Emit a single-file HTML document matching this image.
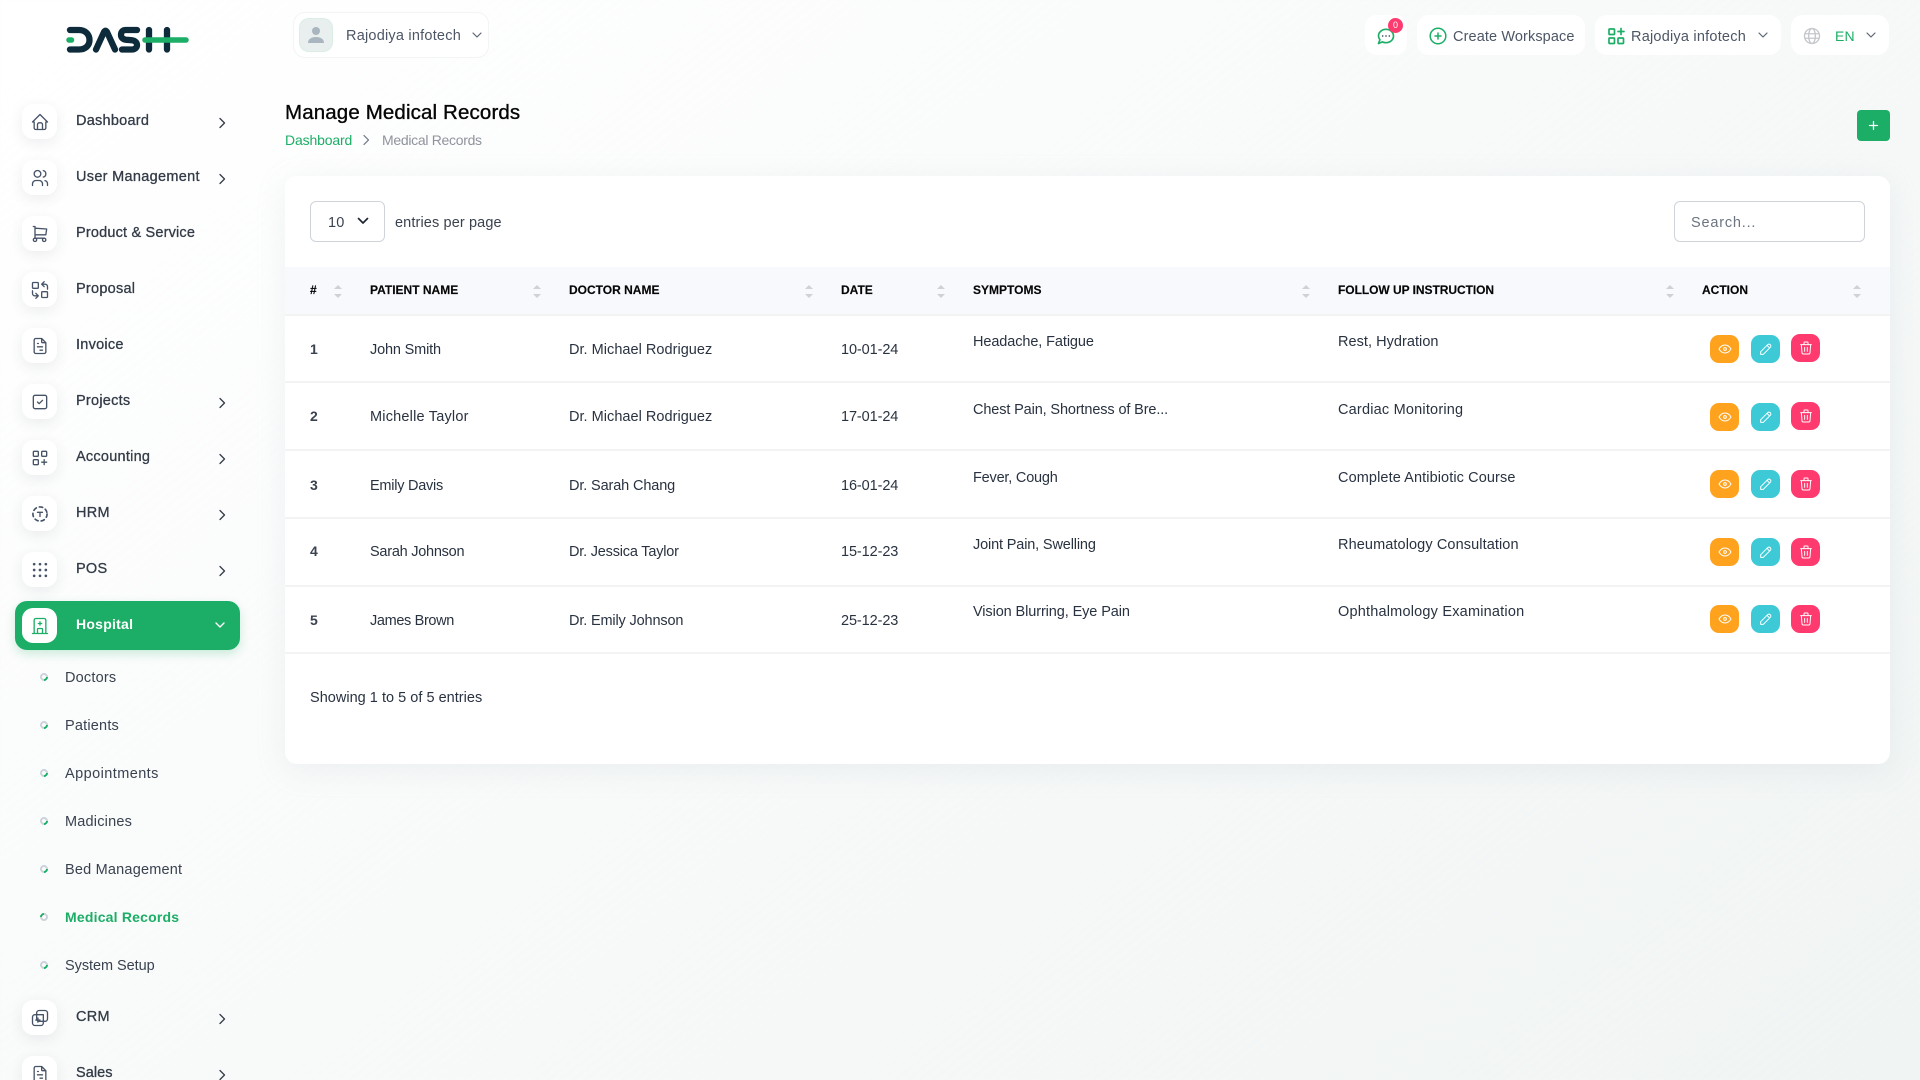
<!DOCTYPE html>
<html lang="en"><head><meta charset="utf-8"><title>Manage Medical Records</title>
<style>
*{box-sizing:border-box}
html,body{margin:0;padding:0;width:1920px;height:1080px;overflow:hidden}
body{background:linear-gradient(141.55deg,rgba(240,244,243,0) 3.46%,#f0f4f3 99.86%),#fff;font-family:"Liberation Sans",sans-serif;color:#293240;position:relative}
.t{position:absolute;white-space:nowrap;line-height:20px;font-size:14.5px;letter-spacing:.2px}
.m{font-size:14.5px;letter-spacing:.25px;color:#333b47;-webkit-text-stroke:.3px #333b47;left:76px}
.s{left:65px;color:#3a4250;letter-spacing:.2px}
.ib{position:absolute;left:22px;width:35px;height:35px;background:#fff;border-radius:11px;box-shadow:0 4px 14px rgba(60,70,90,.09)}
.ib svg{position:absolute;left:7.5px;top:7.5px;width:20px;height:20px;fill:none;stroke:#475467;stroke-width:1.6;stroke-linecap:round;stroke-linejoin:round}
.ch{position:absolute;left:217px;width:10px;height:12px;fill:none;stroke:#333b47;stroke-width:1.3;stroke-linecap:round;stroke-linejoin:round}
.b{position:absolute;left:40px;width:8px;height:8px;border-radius:50%;border:2px solid #ccd2da;border-right-color:#1cae66;transform:rotate(45deg)}
.pill{position:absolute;top:15px;height:40px;background:#fff;border-radius:12px}
.card{position:absolute;left:285px;top:176px;width:1605px;height:588px;background:#fff;border-radius:12px;box-shadow:0 6px 30px rgba(170,180,195,.16)}
.th{position:absolute;left:285px;top:267px;width:1605px;height:47px;background:#f8f9fd}
.ln{position:absolute;left:285px;width:1605px;height:2px;background:#f3f3f3}
.h{font-size:12px;font-weight:700;color:#060606;letter-spacing:0;top:279.500px;-webkit-text-stroke:.15px #060606}
.sa{position:absolute;top:284px;width:10px;height:15px}
.n{font-weight:700;left:310px;font-size:14px;color:#3a4250}
.ab{position:absolute;width:29px;height:28px;border-radius:9px}
.ab svg{position:absolute;left:6.5px;top:6px;width:16px;height:16px;fill:none;stroke:#fff;stroke-width:1.5;stroke-linecap:round;stroke-linejoin:round}
.or{background:#ffa21d;left:1710px}.cy{background:#3ec9d6;left:1751px}.rd{background:#ff3a6e;left:1791px}
.box{position:absolute;top:201px;height:41px;border:1px solid #ced4da;border-radius:6px;background:#fff}
</style></head><body>
<svg width="0" height="0" style="position:absolute">
<symbol id="home" viewBox="0 0 24 24"><path d="M5 12H3l9-9 9 9h-2M5 12v7a2 2 0 0 0 2 2h10a2 2 0 0 0 2-2v-7M9 21v-6a2 2 0 0 1 2-2h2a2 2 0 0 1 2 2v6"/></symbol>
<symbol id="users" viewBox="0 0 24 24"><circle cx="9" cy="7" r="4"/><path d="M3 21v-2a4 4 0 0 1 4-4h4a4 4 0 0 1 4 4v2M16 3.13a4 4 0 0 1 0 7.75M21 21v-2a4 4 0 0 0-3-3.85"/></symbol>
<symbol id="cart" viewBox="0 0 24 24"><circle cx="6" cy="19" r="2"/><circle cx="17" cy="19" r="2"/><path d="M17 17H6V3H4M6 5l14 1-1 7H6"/></symbol>
<symbol id="swap" viewBox="0 0 24 24"><rect x="3" y="3" width="7" height="7" rx="1"/><rect x="14" y="14" width="7" height="7" rx="1"/><path d="M21 11V8a3 3 0 0 0-3-3h-4l3 3m0-6l-3 3M3 13v3a3 3 0 0 0 3 3h4l-3-3m0 6l3-3"/></symbol>
<symbol id="file" viewBox="0 0 24 24"><path d="M14 3v4a1 1 0 0 0 1 1h4M17 21H7a2 2 0 0 1-2-2V5a2 2 0 0 1 2-2h7l5 5v11a2 2 0 0 1-2 2zM9 9h1M9 13h6M12 17h3"/></symbol>
<symbol id="check" viewBox="0 0 24 24"><rect x="4" y="4" width="16" height="16" rx="2"/><path d="M9 12l2 2 4-4"/></symbol>
<symbol id="apps" viewBox="0 0 24 24"><rect x="4" y="4" width="6" height="6" rx="1"/><rect x="14" y="4" width="6" height="6" rx="1"/><rect x="4" y="14" width="6" height="6" rx="1"/><path d="M14 17h6M17 14v6"/></symbol>
<symbol id="hrm" viewBox="0 0 24 24"><circle cx="12" cy="12" r="8.500" stroke-dasharray="4 3.800" stroke-width="2"/><path d="M9 10h6M12 10v5"/></symbol>
<symbol id="dots" viewBox="0 0 24 24"><g fill="#475467" stroke="none"><circle cx="5" cy="5" r="1.600"/><circle cx="12" cy="5" r="1.600"/><circle cx="19" cy="5" r="1.600"/><circle cx="5" cy="12" r="1.600"/><circle cx="12" cy="12" r="1.600"/><circle cx="19" cy="12" r="1.600"/><circle cx="5" cy="19" r="1.600"/><circle cx="12" cy="19" r="1.600"/><circle cx="19" cy="19" r="1.600"/></g></symbol>
<symbol id="crm" viewBox="0 0 24 24"><rect x="8" y="3" width="13" height="13" rx="3"/><path d="M16 8H6a3 3 0 0 0-3 3v7a3 3 0 0 0 3 3h7a3 3 0 0 0 3-3V8zM9.500 12v5M7 14.500h5"/></symbol>
<symbol id="hosp" viewBox="0 0 24 24"><path d="M3 21h18M5 21V5a2 2 0 0 1 2-2h10a2 2 0 0 1 2 2v16M9 21v-5a1 1 0 0 1 1-1h4a1 1 0 0 1 1 1v5M10 9h4M12 7v4"/></symbol>
<symbol id="eye" viewBox="0 0 24 24"><path d="M10 12a2 2 0 1 0 4 0a2 2 0 0 0-4 0M21 12c-2.400 4-5.400 6-9 6s-6.600-2-9-6c2.400-4 5.400-6 9-6s6.600 2 9 6"/></symbol>
<symbol id="pen" viewBox="0 0 24 24"><path d="M4 20h4L18.500 9.500a2.830 2.830 0 0 0-4-4L4 16v4M13.500 6.500l4 4"/></symbol>
<symbol id="trash" viewBox="0 0 24 24"><path d="M4 7h16M10 11v6M14 11v6M5 7l1 12a2 2 0 0 0 2 2h8a2 2 0 0 0 2-2l1-12M9 7V4a1 1 0 0 1 1-1h4a1 1 0 0 1 1 1v3"/></symbol>
<symbol id="r" viewBox="0 0 10 12"><path d="M3 1.500L7.500 6 3 10.500"/></symbol>
<symbol id="sort" viewBox="0 0 10 15"><path d="M5 1l4 4H1zM5 14l4-4H1z" fill="#ced1d6" stroke="none"/></symbol>
</svg>

<!-- logo -->
<svg style="position:absolute;left:60px;top:20px" width="135" height="40" viewBox="0 0 135 40" fill="none" stroke-linecap="round" stroke-linejoin="round">
<g stroke="#0d2b3a" stroke-width="6.300">
<path d="M10 10H19C25.500 10 29.500 14.500 29.500 20S25.500 29.500 19 29.500H10"/>
<path d="M36 29.500L44 12Q45.500 9.500 47 12L55 29.500"/>
<path d="M77 10H66C62 10 61 12.500 61 15S63 19.300 66 19.700L72 20.300C75.500 20.700 77 23 77 25S75.500 29.500 72 29.500H62"/>
<path d="M89 10V29.500M107 10V29.500"/>
</g>
<path d="M9 20H11.500M85 20H126" stroke="#1cae66" stroke-width="5.500"/>
</svg>

<!-- sidebar -->
<div class="ib" style="top:104px"><svg><use href="#home"/></svg></div><div class="t m" style="top:111px">Dashboard</div><svg class="ch" style="top:117px"><use href="#r"/></svg>
<div class="ib" style="top:160px"><svg><use href="#users"/></svg></div><div class="t m" style="top:167px;letter-spacing:.3px">User Management</div><svg class="ch" style="top:173px"><use href="#r"/></svg>
<div class="ib" style="top:216px"><svg><use href="#cart"/></svg></div><div class="t m" style="top:223px;letter-spacing:.18px">Product &amp; Service</div>
<div class="ib" style="top:272px"><svg><use href="#swap"/></svg></div><div class="t m" style="top:279px">Proposal</div>
<div class="ib" style="top:328px"><svg><use href="#file"/></svg></div><div class="t m" style="top:335px">Invoice</div>
<div class="ib" style="top:384px"><svg><use href="#check"/></svg></div><div class="t m" style="top:391px">Projects</div><svg class="ch" style="top:397px"><use href="#r"/></svg>
<div class="ib" style="top:440px"><svg><use href="#apps"/></svg></div><div class="t m" style="top:447px">Accounting</div><svg class="ch" style="top:453px"><use href="#r"/></svg>
<div class="ib" style="top:496px"><svg><use href="#hrm"/></svg></div><div class="t m" style="top:503px">HRM</div><svg class="ch" style="top:509px"><use href="#r"/></svg>
<div class="ib" style="top:552px"><svg><use href="#dots"/></svg></div><div class="t m" style="top:559px">POS</div><svg class="ch" style="top:565px"><use href="#r"/></svg>

<div style="position:absolute;left:15px;top:601px;width:225px;height:49px;background:#1cae66;border-radius:12px;box-shadow:0 4px 10px rgba(28,174,102,.22)"></div>
<div class="ib" style="top:608px;box-shadow:none"><svg style="stroke:#1cae66"><use href="#hosp"/></svg></div>
<div class="t" style="left:76px;top:614px;color:#fff;font-weight:700;font-size:14px;letter-spacing:.25px">Hospital</div>
<svg style="position:absolute;left:214px;top:620px;width:12px;height:10px;fill:none;stroke:#fff;stroke-width:1.4;stroke-linecap:round;stroke-linejoin:round" viewBox="0 0 12 10"><path d="M2 3l4 4 4-4"/></svg>

<span class="b" style="top:673px"></span><div class="t s" style="top:668px">Doctors</div>
<span class="b" style="top:721px"></span><div class="t s" style="top:716px">Patients</div>
<span class="b" style="top:769px"></span><div class="t s" style="top:764px;letter-spacing:.43px">Appointments</div>
<span class="b" style="top:817px"></span><div class="t s" style="top:812px">Madicines</div>
<span class="b" style="top:865px"></span><div class="t s" style="top:860px">Bed Management</div>
<span class="b" style="top:913px;border-color:#ccd2da;border-left-color:#1cae66"></span><div class="t s" style="top:907px;color:#1cae66;font-weight:700;font-size:14px;letter-spacing:.2px">Medical Records</div>
<span class="b" style="top:961px"></span><div class="t s" style="top:956px;letter-spacing:-.05px">System Setup</div>

<div class="ib" style="top:1000px"><svg><use href="#crm"/></svg></div><div class="t m" style="top:1006.500px">CRM</div><svg class="ch" style="top:1013px"><use href="#r"/></svg>
<div class="ib" style="top:1056px"><svg><use href="#file"/></svg></div><div class="t m" style="top:1062.500px;letter-spacing:.05px">Sales</div><svg class="ch" style="top:1069px"><use href="#r"/></svg>

<!-- top bar -->
<div style="position:absolute;left:293px;top:12px;width:196px;height:46px;background:#fff;border:1px solid #f2f4f5;border-radius:12px"></div>
<div style="position:absolute;left:299px;top:18px;width:34px;height:34px;border-radius:10px;background:#e8efee;box-shadow:inset 0 0 0 1px #dbeee5"></div>
<svg style="position:absolute;left:305px;top:24px" width="22" height="22" viewBox="0 0 22 22"><circle cx="11" cy="7" r="4" fill="#a9b6c0"/><path d="M3 19c0-4 3.500-6 8-6s8 2 8 6z" fill="#a9b6c0"/></svg>
<div class="t" style="left:346px;top:26px;color:#4d5665;letter-spacing:.22px">Rajodiya infotech</div>
<svg style="position:absolute;left:471px;top:30px;width:12px;height:10px;fill:none;stroke:#5c6573;stroke-width:1.2;stroke-linecap:round;stroke-linejoin:round" viewBox="0 0 12 10"><path d="M2 3l4 4 4-4"/></svg>

<div class="pill" style="left:1365px;width:42px"></div>
<svg style="position:absolute;left:1376px;top:26px" width="20" height="20" viewBox="0 0 24 24" fill="none" stroke="#1cae66" stroke-width="2" stroke-linecap="round" stroke-linejoin="round"><path d="M3 21l1.700-4.500C3.600 15 3 13.500 3 12c0-4.500 4-8 9-8s9 3.500 9 8-4 8-9 8c-1.500 0-3-.3-4.300-1z"/><path d="M8 12h.01M12 12h.01M16 12h.01" stroke="#475467"/></svg>
<div style="position:absolute;left:1388px;top:18px;width:15px;height:15px;border-radius:50%;background:#ff3a6e;color:#fff;font-size:9px;line-height:15px;text-align:center">0</div>

<div class="pill" style="left:1417px;width:168px"></div>
<svg style="position:absolute;left:1429px;top:27px" width="18" height="18" viewBox="0 0 18 18" fill="none" stroke="#1cae66" stroke-width="1.500" stroke-linecap="round"><circle cx="9" cy="9" r="7.800"/><path d="M9 6v6M6 9h6"/></svg>
<div class="t" style="left:1453px;top:26.500px;color:#4d5665;letter-spacing:.11px">Create Workspace</div>

<div class="pill" style="left:1595px;width:186px"></div>
<svg style="position:absolute;left:1607px;top:27px" width="18" height="18" viewBox="0 0 18 18" fill="none" stroke="#1cae66" stroke-width="1.700" stroke-linecap="round"><rect x="2" y="2" width="5.500" height="5.500" rx=".8"/><rect x="2" y="11" width="5.500" height="5.500" rx=".8"/><rect x="11" y="11" width="5.500" height="5.500" rx=".8"/><path d="M14 1.500v6M11 4.500h6"/></svg>
<div class="t" style="left:1631px;top:26.500px;color:#4d5665;letter-spacing:.22px">Rajodiya infotech</div>
<svg style="position:absolute;left:1757px;top:30px;width:12px;height:10px;fill:none;stroke:#5c6573;stroke-width:1.2;stroke-linecap:round;stroke-linejoin:round" viewBox="0 0 12 10"><path d="M2 3l4 4 4-4"/></svg>

<div class="pill" style="left:1791px;width:98px"></div>
<svg style="position:absolute;left:1803px;top:27px" width="18" height="18" viewBox="0 0 24 24" fill="none" stroke="#c4c7cb" stroke-width="1.800"><circle cx="12" cy="12" r="10"/><ellipse cx="12" cy="12" rx="4.500" ry="10"/><path d="M2.500 9h19M2.500 15h19"/></svg>
<div class="t" style="left:1835px;top:26px;color:#1cae66;font-size:14px">EN</div>
<svg style="position:absolute;left:1865px;top:30px;width:12px;height:10px;fill:none;stroke:#5c6573;stroke-width:1.2;stroke-linecap:round;stroke-linejoin:round" viewBox="0 0 12 10"><path d="M2 3l4 4 4-4"/></svg>

<!-- page header -->
<div class="t" style="left:285px;top:102px;font-size:20.5px;line-height:22px;color:#060606;-webkit-text-stroke:.35px #060606;letter-spacing:.13px">Manage Medical Records</div>
<div class="t" style="left:285px;top:130px;font-size:14px;color:#1cae66;letter-spacing:-.15px">Dashboard</div>
<svg style="position:absolute;left:361px;top:134px;width:10px;height:12px;fill:none;stroke:#6a7280;stroke-width:1.200;stroke-linecap:round;stroke-linejoin:round"><use href="#r"/></svg>
<div class="t" style="left:382px;top:130px;font-size:14px;color:#8e949d;letter-spacing:-.3px">Medical Records</div>
<div style="position:absolute;left:1857px;top:110px;width:33px;height:31px;background:#1cae66;border-radius:4px"></div>
<svg style="position:absolute;left:1868px;top:120px" width="11" height="11" viewBox="0 0 11 11" stroke="#fff" stroke-width="1.300" stroke-linecap="round"><path d="M5.500 1.500v8M1.500 5.500h8"/></svg>

<!-- card -->
<div class="card"></div>
<div class="box" style="left:310px;width:75px"></div>
<div class="t" style="left:328px;top:212.500px;letter-spacing:.2px;color:#3a4250">10</div>
<svg style="position:absolute;left:356px;top:216px;width:14px;height:10px;fill:none;stroke:#1f2733;stroke-width:1.700;stroke-linecap:round;stroke-linejoin:round" viewBox="0 0 14 10"><path d="M2.500 2.500L7 7l4.500-4.500"/></svg>
<div class="t" style="left:395px;top:212.500px;color:#3a4250;letter-spacing:.12px">entries per page</div>
<div class="box" style="left:1674px;width:191px"></div>
<div class="t" style="left:1691px;top:212.500px;color:#6c7480;letter-spacing:.8px">Search...</div>

<div class="th"></div>
<div class="t h" style="left:310px">#</div><svg class="sa" style="left:333px"><use href="#sort"/></svg>
<div class="t h" style="left:370px">PATIENT NAME</div><svg class="sa" style="left:532px"><use href="#sort"/></svg>
<div class="t h" style="left:569px">DOCTOR NAME</div><svg class="sa" style="left:804px"><use href="#sort"/></svg>
<div class="t h" style="left:841px">DATE</div><svg class="sa" style="left:936px"><use href="#sort"/></svg>
<div class="t h" style="left:973px">SYMPTOMS</div><svg class="sa" style="left:1301px"><use href="#sort"/></svg>
<div class="t h" style="left:1338px;letter-spacing:-.05px">FOLLOW UP INSTRUCTION</div><svg class="sa" style="left:1665px"><use href="#sort"/></svg>
<div class="t h" style="left:1702px">ACTION</div><svg class="sa" style="left:1852px"><use href="#sort"/></svg>

<div class="ln" style="top:314px"></div><div class="ln" style="top:381px"></div><div class="ln" style="top:449px"></div><div class="ln" style="top:517px"></div><div class="ln" style="top:585px"></div><div class="ln" style="top:652px"></div>

<div class="t n" style="top:339px">1</div><div class="t" style="left:370px;top:340px;letter-spacing:-.16px">John Smith</div><div class="t" style="left:569px;top:340px;letter-spacing:.03px">Dr. Michael Rodriguez</div><div class="t" style="left:841px;top:340px;letter-spacing:-.1px">10-01-24</div><div class="t" style="left:973px;top:332px;letter-spacing:-.1px">Headache, Fatigue</div><div class="t" style="left:1338px;top:332px;letter-spacing:.04px">Rest, Hydration</div>
<div class="t n" style="top:406px">2</div><div class="t" style="left:370px;top:407px">Michelle Taylor</div><div class="t" style="left:569px;top:407px;letter-spacing:.03px">Dr. Michael Rodriguez</div><div class="t" style="left:841px;top:407px;letter-spacing:-.1px">17-01-24</div><div class="t" style="left:973px;top:400px;letter-spacing:-.13px">Chest Pain, Shortness of Bre...</div><div class="t" style="left:1338px;top:400px">Cardiac Monitoring</div>
<div class="t n" style="top:475px">3</div><div class="t" style="left:370px;top:476px;letter-spacing:-.25px">Emily Davis</div><div class="t" style="left:569px;top:476px;letter-spacing:-.13px">Dr. Sarah Chang</div><div class="t" style="left:841px;top:476px;letter-spacing:-.1px">16-01-24</div><div class="t" style="left:973px;top:468px;letter-spacing:-.2px">Fever, Cough</div><div class="t" style="left:1338px;top:468px;letter-spacing:.1px">Complete Antibiotic Course</div>
<div class="t n" style="top:541px">4</div><div class="t" style="left:370px;top:542px;letter-spacing:-.25px">Sarah Johnson</div><div class="t" style="left:569px;top:542px;letter-spacing:-.2px">Dr. Jessica Taylor</div><div class="t" style="left:841px;top:542px;letter-spacing:-.1px">15-12-23</div><div class="t" style="left:973px;top:535px;letter-spacing:-.15px">Joint Pain, Swelling</div><div class="t" style="left:1338px;top:535px;letter-spacing:.1px">Rheumatology Consultation</div>
<div class="t n" style="top:610px">5</div><div class="t" style="left:370px;top:611px;letter-spacing:-.35px">James Brown</div><div class="t" style="left:569px;top:611px;letter-spacing:-.15px">Dr. Emily Johnson</div><div class="t" style="left:841px;top:611px;letter-spacing:-.1px">25-12-23</div><div class="t" style="left:973px;top:602px;letter-spacing:-.1px">Vision Blurring, Eye Pain</div><div class="t" style="left:1338px;top:602px">Ophthalmology Examination</div>

<div class="ab or" style="top:335px"><svg><use href="#eye"/></svg></div><div class="ab cy" style="top:335px"><svg><use href="#pen"/></svg></div><div class="ab rd" style="top:334px"><svg><use href="#trash"/></svg></div>
<div class="ab or" style="top:403px"><svg><use href="#eye"/></svg></div><div class="ab cy" style="top:403px"><svg><use href="#pen"/></svg></div><div class="ab rd" style="top:402px"><svg><use href="#trash"/></svg></div>
<div class="ab or" style="top:470px"><svg><use href="#eye"/></svg></div><div class="ab cy" style="top:470px"><svg><use href="#pen"/></svg></div><div class="ab rd" style="top:470px"><svg><use href="#trash"/></svg></div>
<div class="ab or" style="top:538px"><svg><use href="#eye"/></svg></div><div class="ab cy" style="top:538px"><svg><use href="#pen"/></svg></div><div class="ab rd" style="top:538px"><svg><use href="#trash"/></svg></div>
<div class="ab or" style="top:605px"><svg><use href="#eye"/></svg></div><div class="ab cy" style="top:605px"><svg><use href="#pen"/></svg></div><div class="ab rd" style="top:605px"><svg><use href="#trash"/></svg></div>

<div class="t" style="left:310px;top:688px;letter-spacing:.02px">Showing 1 to 5 of 5 entries</div>
</body></html>
